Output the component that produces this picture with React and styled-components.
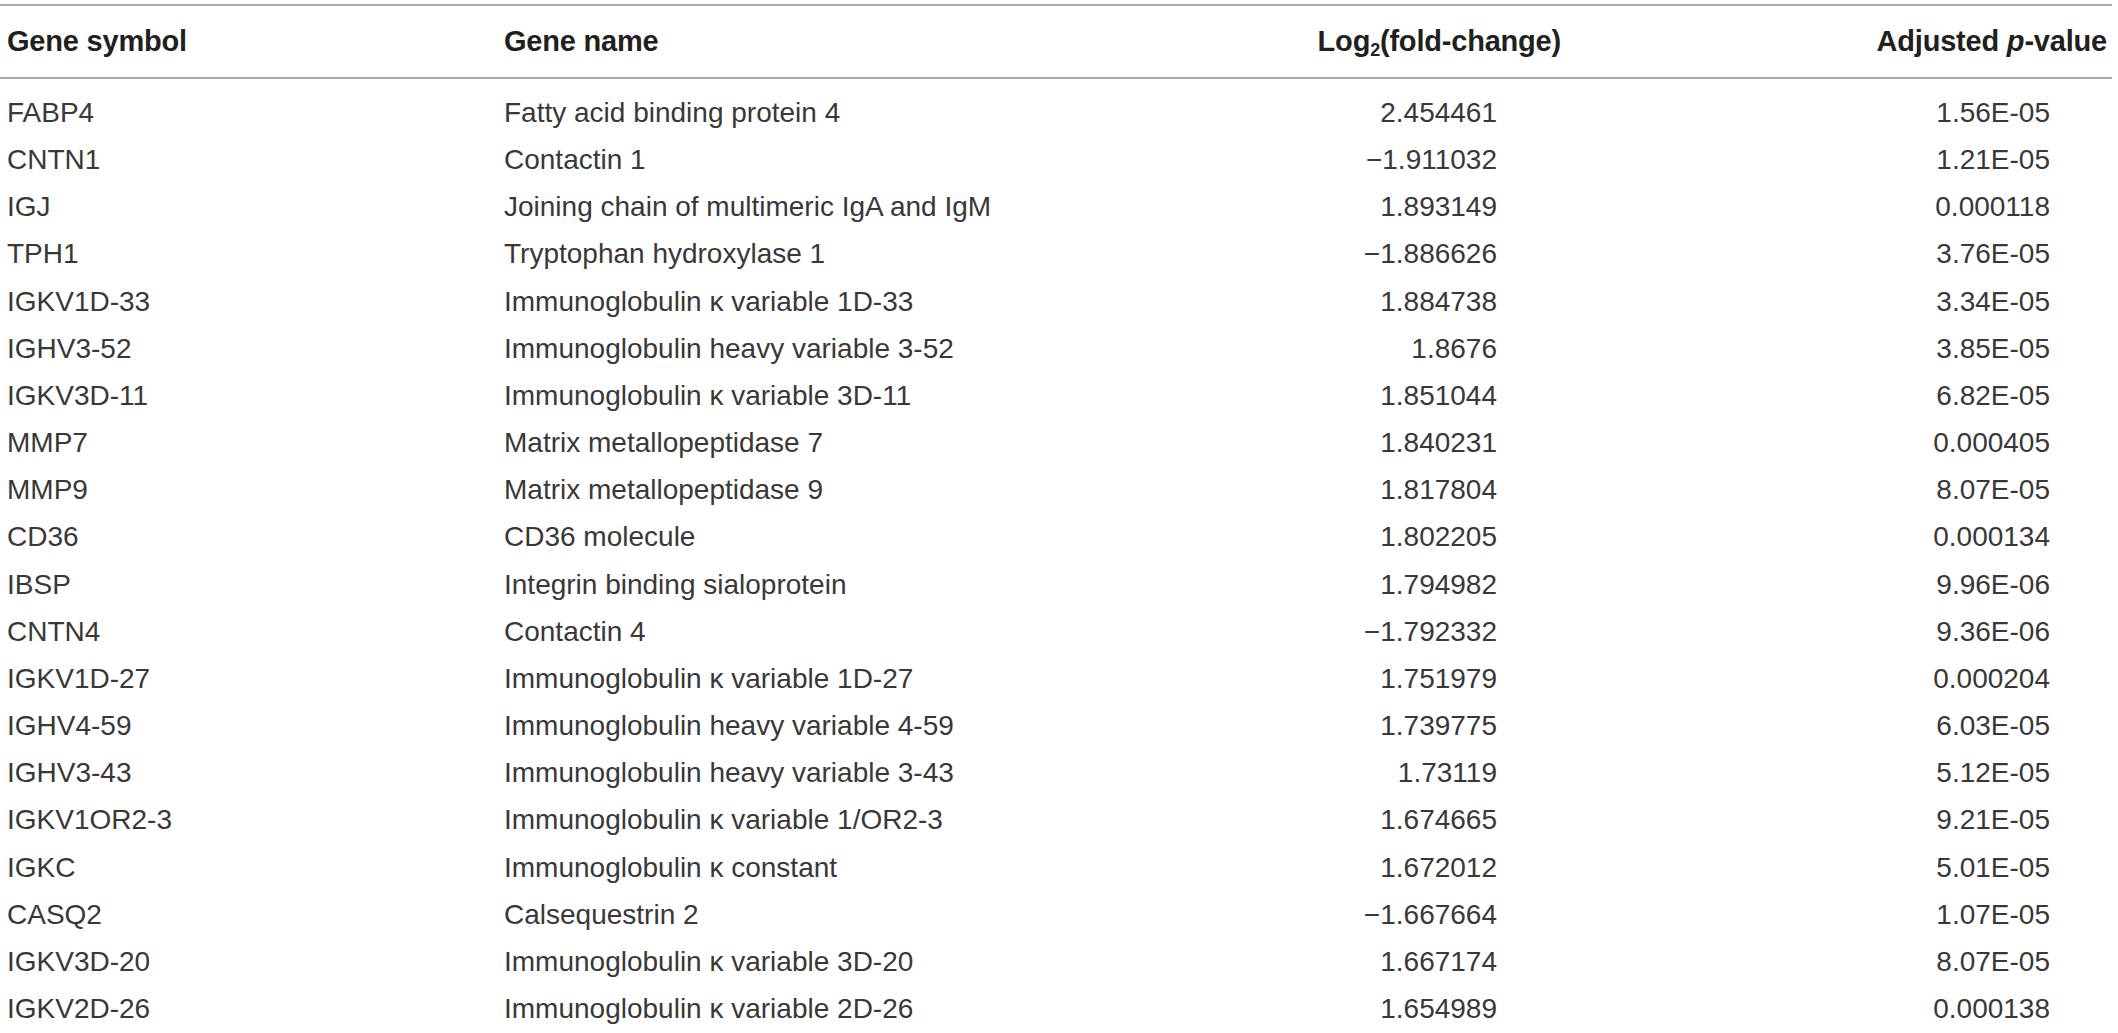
import React from "react";
import styled, { createGlobalStyle } from "styled-components";

const Global = createGlobalStyle`
  html, body { margin: 0; padding: 0; background: #ffffff; }
  body { font-family: "Liberation Sans", Arial, Helvetica, sans-serif; }
`;

const Page = styled.div`
  width: 2118px;
  padding-top: 4px;
`;

const Table = styled.div`
  width: 2112px;
  border-top: 2px solid #a9a9a9;
`;

const Row = styled.div`
  display: grid;
  grid-template-columns: 497px 1fr 461px 546px;
  padding: 0 5px 0 7px;
  align-items: center;
`;

const HeadRow = styled(Row)`
  height: 71px;
  border-bottom: 2px solid #a9a9a9;
`;

const Body = styled.div`
  padding-top: 10px;
`;

const BodyRow = styled(Row)`
  height: 47.17px;
`;

const Th = styled.div`
  font-size: 29px;
  font-weight: 700;
  color: #231f20;
  letter-spacing: -0.2px;
  white-space: nowrap;
  text-align: ${(p) => (p.$right ? "right" : "left")};
`;

const Td = styled.div`
  font-size: 28px;
  line-height: 47.17px;
  color: #3a3738;
  white-space: nowrap;
  text-align: ${(p) => (p.$pad ? "right" : "left")};
  padding-right: ${(p) => p.$pad || 0}px;
`;

const Sub = styled.span`
  font-size: 0.62em;
  position: relative;
  top: 0.28em;
`;

const data = [
  ["FABP4", "Fatty acid binding protein 4", "2.454461", "1.56E-05"],
  ["CNTN1", "Contactin 1", "\u22121.911032", "1.21E-05"],
  ["IGJ", "Joining chain of multimeric IgA and IgM", "1.893149", "0.000118"],
  ["TPH1", "Tryptophan hydroxylase 1", "\u22121.886626", "3.76E-05"],
  ["IGKV1D-33", "Immunoglobulin \u03ba variable 1D-33", "1.884738", "3.34E-05"],
  ["IGHV3-52", "Immunoglobulin heavy variable 3-52", "1.8676", "3.85E-05"],
  ["IGKV3D-11", "Immunoglobulin \u03ba variable 3D-11", "1.851044", "6.82E-05"],
  ["MMP7", "Matrix metallopeptidase 7", "1.840231", "0.000405"],
  ["MMP9", "Matrix metallopeptidase 9", "1.817804", "8.07E-05"],
  ["CD36", "CD36 molecule", "1.802205", "0.000134"],
  ["IBSP", "Integrin binding sialoprotein", "1.794982", "9.96E-06"],
  ["CNTN4", "Contactin 4", "\u22121.792332", "9.36E-06"],
  ["IGKV1D-27", "Immunoglobulin \u03ba variable 1D-27", "1.751979", "0.000204"],
  ["IGHV4-59", "Immunoglobulin heavy variable 4-59", "1.739775", "6.03E-05"],
  ["IGHV3-43", "Immunoglobulin heavy variable 3-43", "1.73119", "5.12E-05"],
  ["IGKV1OR2-3", "Immunoglobulin \u03ba variable 1/OR2-3", "1.674665", "9.21E-05"],
  ["IGKC", "Immunoglobulin \u03ba constant", "1.672012", "5.01E-05"],
  ["CASQ2", "Calsequestrin 2", "\u22121.667664", "1.07E-05"],
  ["IGKV3D-20", "Immunoglobulin \u03ba variable 3D-20", "1.667174", "8.07E-05"],
  ["IGKV2D-26", "Immunoglobulin \u03ba variable 2D-26", "1.654989", "0.000138"],
];

export default function App() {
  return (
    <Page>
      <Global />
      <Table>
        <HeadRow>
          <Th>Gene symbol</Th>
          <Th>Gene name</Th>
          <Th $right>
            Log<Sub>2</Sub>(fold-change)
          </Th>
          <Th $right>
            Adjusted <i>p</i>-value
          </Th>
        </HeadRow>
        <Body>
          {data.map(([sym, name, fc, p]) => (
            <BodyRow key={sym}>
              <Td>{sym}</Td>
              <Td>{name}</Td>
              <Td $pad={64}>{fc}</Td>
              <Td $pad={57}>{p}</Td>
            </BodyRow>
          ))}
        </Body>
      </Table>
    </Page>
  );
}
